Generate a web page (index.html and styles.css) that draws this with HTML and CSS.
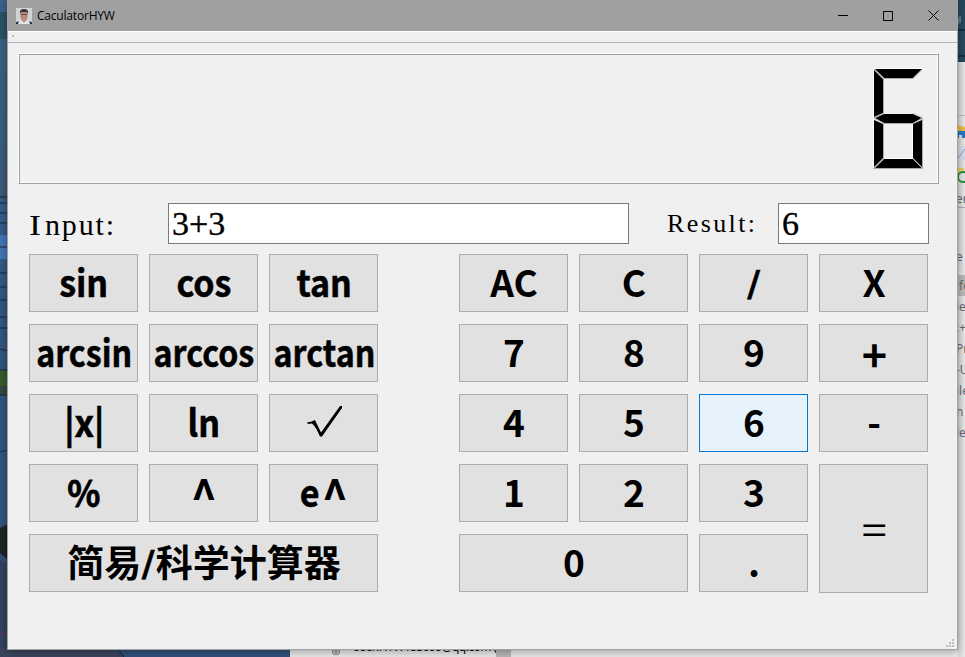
FILE: index.html
```
<!DOCTYPE html>
<html lang="zh-CN">
<head>
<meta charset="utf-8">
<title>CaculatorHYW</title>
<link rel="stylesheet" href="styles.css">
</head>
<body>
<svg class="wallpaper" width="965" height="657" viewBox="0 0 965 657">
  <defs>
    <linearGradient id="sea" x2="0" y2="1"><stop offset="0" stop-color="#3c6288"/><stop offset=".3" stop-color="#3b5a75"/><stop offset=".31" stop-color="#365d8c"/><stop offset=".55" stop-color="#33537c"/><stop offset=".75" stop-color="#315784"/><stop offset="1" stop-color="#3a4663"/></linearGradient>
  </defs>
  <rect width="965" height="657" fill="url(#sea)"/>
  <rect y="12" width="8" height="27" fill="#285363"/>
  <rect y="235" width="8" height="24" fill="#4475b7"/>
  <rect y="370" width="8" height="16" fill="#365b2a"/>
  <rect y="386" width="8" height="9" fill="#304944"/>
  <path d="M0 197h8M0 203h8M0 213h8M0 223h8M0 247h8M0 273h8M0 287h8M0 300h8M0 317h8M0 328h8M0 349l8 2M0 370h8M0 395h8M0 452l8-2" stroke="#18273b" fill="none"/>
  <path d="M0 528l8-4v36l-8-7z" fill="#1c2626"/>
  <path d="M0 560l8 4v86H0z" fill="#35425f"/>
  <path d="M0 632l8 4" stroke="#523b55" stroke-width="2"/>
  <path d="M0 649h118l6 8H0z" fill="#39435c"/>
  <path d="M118 649h172v8H124z" fill="#315079"/>
  <path d="M118 649l6 8" stroke="#19283c"/>
  <rect x="957" width="8" height="62" fill="#27495d"/>
  <path d="M957 30h8M957 56h8" stroke="#152f42" stroke-width="2"/>
  <path d="M958 18v6m2-8v7" stroke="#99aaaa"/>
</svg>
<div class="editor">
  <svg class="scroll-mark" width="8" height="8" viewBox="0 0 8 8"><path d="M.5 0v4q0 2.500 2 2.500h3q2 0 2-2.500V0" fill="#bbb" stroke="#888"/><path d="M4 0v5" stroke="#777"/></svg>
  <span class="mail">User:HYW153099@qq.com (</span>
  <i class="thumb"></i>
</div>
<aside class="side">
  <svg class="side-icons" width="7" height="70" viewBox="0 0 7 70"><path d="M0 .5h7" stroke="#bbb"/><path d="M0 10l3 1 4 1v6H0z" fill="#edb93f"/><path d="M0 16h7v7H4v-3H1v3H0z" fill="#237ac8"/><path d="M0 31h7v14H0z" fill="#d3dbe8"/><path d="M0 43l7-9" stroke="#8fa2c1"/><path d="M0 53h6v7H0z" fill="#e9ca67"/><circle cx="5" cy="62" r="5" fill="#dce5df" stroke="#258e3b" stroke-width="2"/></svg>
  <span class="line dark">er</span>
  <span class="line gap">e</span>
  <span class="line picked">&nbsp;fe</span>
  <span class="line">le</span><span class="line">:+</span><span class="line">Pr</span><span class="line">-U</span><span class="line">ile</span><span class="line">n</span><span class="line">le</span>
</aside>
<main class="window">
  <header class="titlebar">
    <svg class="avatar" width="16" height="16" viewBox="0 0 16 16"><path fill="#d0d4d6" d="M0 0h16v16H0z"/><path d="M0 16v-2l5-1h6l5 1v2z" fill="#263142"/><path d="M5 10h6v5H5z" fill="#c99b88"/><path d="M3 13l2-1 3 3 3-3 2 1 1 3H2z" fill="#e2e6ea"/><ellipse cx="8" cy="7" rx="3.800" ry="5.500" fill="#b58a7a"/><path d="M4 6Q3 1 8 1t4 5l-1-2H5z" fill="#393535"/><path d="M5 6.500h6" stroke="#655154"/></svg>
    <h1>CaculatorHYW</h1>
    <div class="controls">
      <svg width="10" height="11" viewBox="0 0 10 11"><path d="M0 5.500h10" stroke="#000"/></svg>
      <svg width="10" height="10" viewBox="0 0 10 10"><path d="M.5.500h9v9h-9z" fill="none" stroke="#000"/></svg>
      <svg width="11" height="11" viewBox="0 0 11 11"><path d="M.5.500l10 10M10.500.500l-10 10" stroke="#000"/></svg>
    </div>
  </header>
  <div class="toolbar"></div>
  <section class="lcd">
    <svg width="52" height="104" viewBox="872 67 52 104" role="img" aria-label="6">
      <path d="M875 69h47l-9 9h-29zM874 70l9 9v34l-9 4zM875 118l9-4h29l9 4-9 5h-29zM874 120l9 4v34l-9 9zM922 120l-9 4v34l9 9zM875 168l9-9h29l9 9z"/>
      <path d="M874 68.500h48M873.500 69v48M873.500 120v48M884 123.500" stroke="#fff" fill="none"/>
      <path d="M874 69l10 9.500h29l9-9M883.500 79v34.500l-9.500 4.500 10 5.500h29l9.500-5.500-9.500-4.500M883.500 124v34.500l-10 10h49V119M912.500 158.500l10 10" stroke="#aaa" fill="none"/>
      <path d="M884 158.500h28.500V124" stroke="#fff" fill="none"/>
    </svg>
  </section>
  <section class="fields">
    <label class="input-label" for="expression"><span class="cap">I</span>nput:</label>
    <input id="expression" class="expression" value="3+3">
    <label class="result-label" for="result">Result:</label>
    <input id="result" class="result" value="6">
  </section>
  <section class="keys">
    <div class="pad science">
      <button><span class="word">sin</span></button><button><span class="word">cos</span></button><button><span class="word">tan</span></button>
      <button><span class="long">arcsin</span></button><button><span class="long">arccos</span></button><button><span class="long">arctan</span></button>
      <button><span class="abs">|x|</span></button><button><span class="word">ln</span></button>
      <button aria-label="√"><svg width="36" height="32" viewBox="0 0 36 32"><path d="M0 16.500q5-1 8-2.500l6 12.500L33 0h2v2L15 30.500h-2Q9 21 5 17.500l-4 .5z"/></svg></button>
      <button><span class="percent">%</span></button><button><span class="caret">^</span></button><button><span class="word">e</span><span class="caret">^</span></button>
      <button class="mode">简易<span class="slash">/</span>科学计算器</button>
    </div>
    <div class="pad numbers">
      <button>AC</button><button>C</button><button><span class="slash">/</span></button><button>X</button>
      <button>7</button><button>8</button><button>9</button><button class="plus"><span>+</span></button>
      <button>4</button><button>5</button><button class="hover">6</button><button>-</button>
      <button>1</button><button>2</button><button>3</button><button class="equals"><span>=</span></button>
      <button class="zero">0</button><button>.</button>
    </div>
  </section>
  <svg class="grip" width="8" height="8" viewBox="0 0 8 8"><path d="M6 0h2v2H6zM3 3h2v2H3zm3 0h2v2H6zM0 6h2v2H0zm3 0h2v2H3zm3 0h2v2H6z" fill="#bfbfbf"/></svg>
</main>
</body>
</html>
```
FILE: styles.css
```
* { box-sizing: border-box; }
body { margin: 0; width: 965px; height: 657px; overflow: hidden; position: relative; font-family: "Noto Sans", sans-serif; }
.wallpaper { position: absolute; left: 0; top: 0; }
.editor { position: absolute; left: 290px; top: 640px; width: 675px; height: 17px; background: #e6e6e6; overflow: hidden; }
.scroll-mark { position: absolute; left: 42px; top: 8px; }
.mail { position: absolute; left: 62px; top: -3px; font: 12px/20px "Noto Sans", sans-serif; letter-spacing: -.55px; white-space: nowrap; }
.thumb { position: absolute; left: 206px; top: 0; width: 15px; height: 17px; background: #b5b5b5; }
.side { position: absolute; left: 958px; top: 62px; width: 7px; height: 595px; background: linear-gradient(90deg, #d5d5d5, #e9e9e9); overflow: hidden; padding-top: 53px; }
.side-icons { display: block; margin-bottom: 3px; }
.line { display: block; height: 21px; margin-left: -2px; font: 12px/21px "Noto Sans", sans-serif; color: #68686c; white-space: nowrap; }
.dark { height: 20px; border-bottom: 1px solid #aaa; }
.gap { margin-top: 38px; margin-bottom: 8px; color: #4b6688; }
.picked { background: #b7b7b7; }
.window { position: relative; width: 951px; height: 650px; margin-left: 7px; background: #f0f0f0; border: solid #a2a2a2; border-width: 0 1px 1px; box-shadow: 0 1px 8px rgba(0, 0, 0, .35); }
.titlebar { height: 31px; background: #a0a0a0; display: flex; align-items: center; padding-left: 8px; }
.avatar { margin-right: 5px; }
h1 { margin: 0; font: 12px/18px "Open Sans", sans-serif; letter-spacing: -.2px; }
.controls { display: flex; align-items: center; gap: 35px; margin-left: auto; margin-right: 18px; }
.toolbar { height: 12px; border-top: 1px solid #fff; border-bottom: 1px solid #b5b5b5; }
.toolbar::before { content: ""; display: block; width: 2px; height: 2px; margin: 3px 0 0 4px; background: #bbb; }
.lcd { width: 921px; height: 131px; margin: 10px 0 0 10px; border: 1px solid; border-color: #fff #a0a0a0 #a0a0a0 #fff; box-shadow: inset 1px 1px #a0a0a0, inset -1px -1px #fff; display: flex; justify-content: flex-end; padding: 13px 14px 0 0; }
.fields { display: flex; height: 41px; margin: 19px 0 10px 21px; }
.fields label, .fields input { font-family: "Liberation Serif", serif; }
.input-label { width: 139px; font-size: 30px; line-height: 43px; letter-spacing: 1.9px; }
.cap { display: inline-block; transform: scaleX(1.2); transform-origin: left; margin-right: 4px; }
.fields input { height: 41px; border: 1px solid #7a7a7a; background: #fff; padding: 0 0 0 3px; font-size: 34px; color: #000; -webkit-text-stroke: .4px #000; }
.expression { width: 461px; }
.result-label { width: 149px; padding-left: 38px; font-size: 26px; line-height: 42px; letter-spacing: 2.4px; }
.result { width: 151px; }
.keys { display: flex; gap: 81px; margin-left: 21px; }
.pad { display: grid; grid-auto-rows: 58px; gap: 12px 11px; }
.science { grid-template-columns: repeat(3, 109px); }
.numbers { grid-template-columns: repeat(4, 109px); }
button { display: flex; align-items: center; justify-content: center; margin: 0; padding: 0 0 4px 1px; min-width: 0; border: 1px solid #adadad; background: #e1e1e1; color: #000; font: bold 37px/51px "Noto Sans CJK SC", sans-serif; white-space: nowrap; }
button svg { margin: 2px 0 0 1px; }
.word { transform: scaleX(.92); -webkit-text-stroke: .5px #000; }
.long { transform: scaleX(.87); -webkit-text-stroke: .5px #000; }
.abs { -webkit-text-stroke: .6px #000; transform: scaleX(.94); }
.percent { transform: scaleX(.93); -webkit-text-stroke: .8px #000; }
.slash { transform: scaleY(.8); -webkit-text-stroke: .6px #000; }
.caret { font-size: 47px; line-height: 51px; transform: translateY(3px) scaleX(.95); }
.mode { grid-column: span 3; }
.zero { grid-column: span 2; }
.plus { font-size: 43px; padding-left: 2px; }
.plus span { transform: translateY(2px); }
.equals { grid-row: span 2; height: 129px; font-weight: 400; padding: 0 0 0 2px; }
.equals span { transform: scaleX(1.22); }
.hover { background: #e5f1fb; border-color: #0078d7; }
.grip { position: absolute; right: 3px; bottom: 2px; }
```
